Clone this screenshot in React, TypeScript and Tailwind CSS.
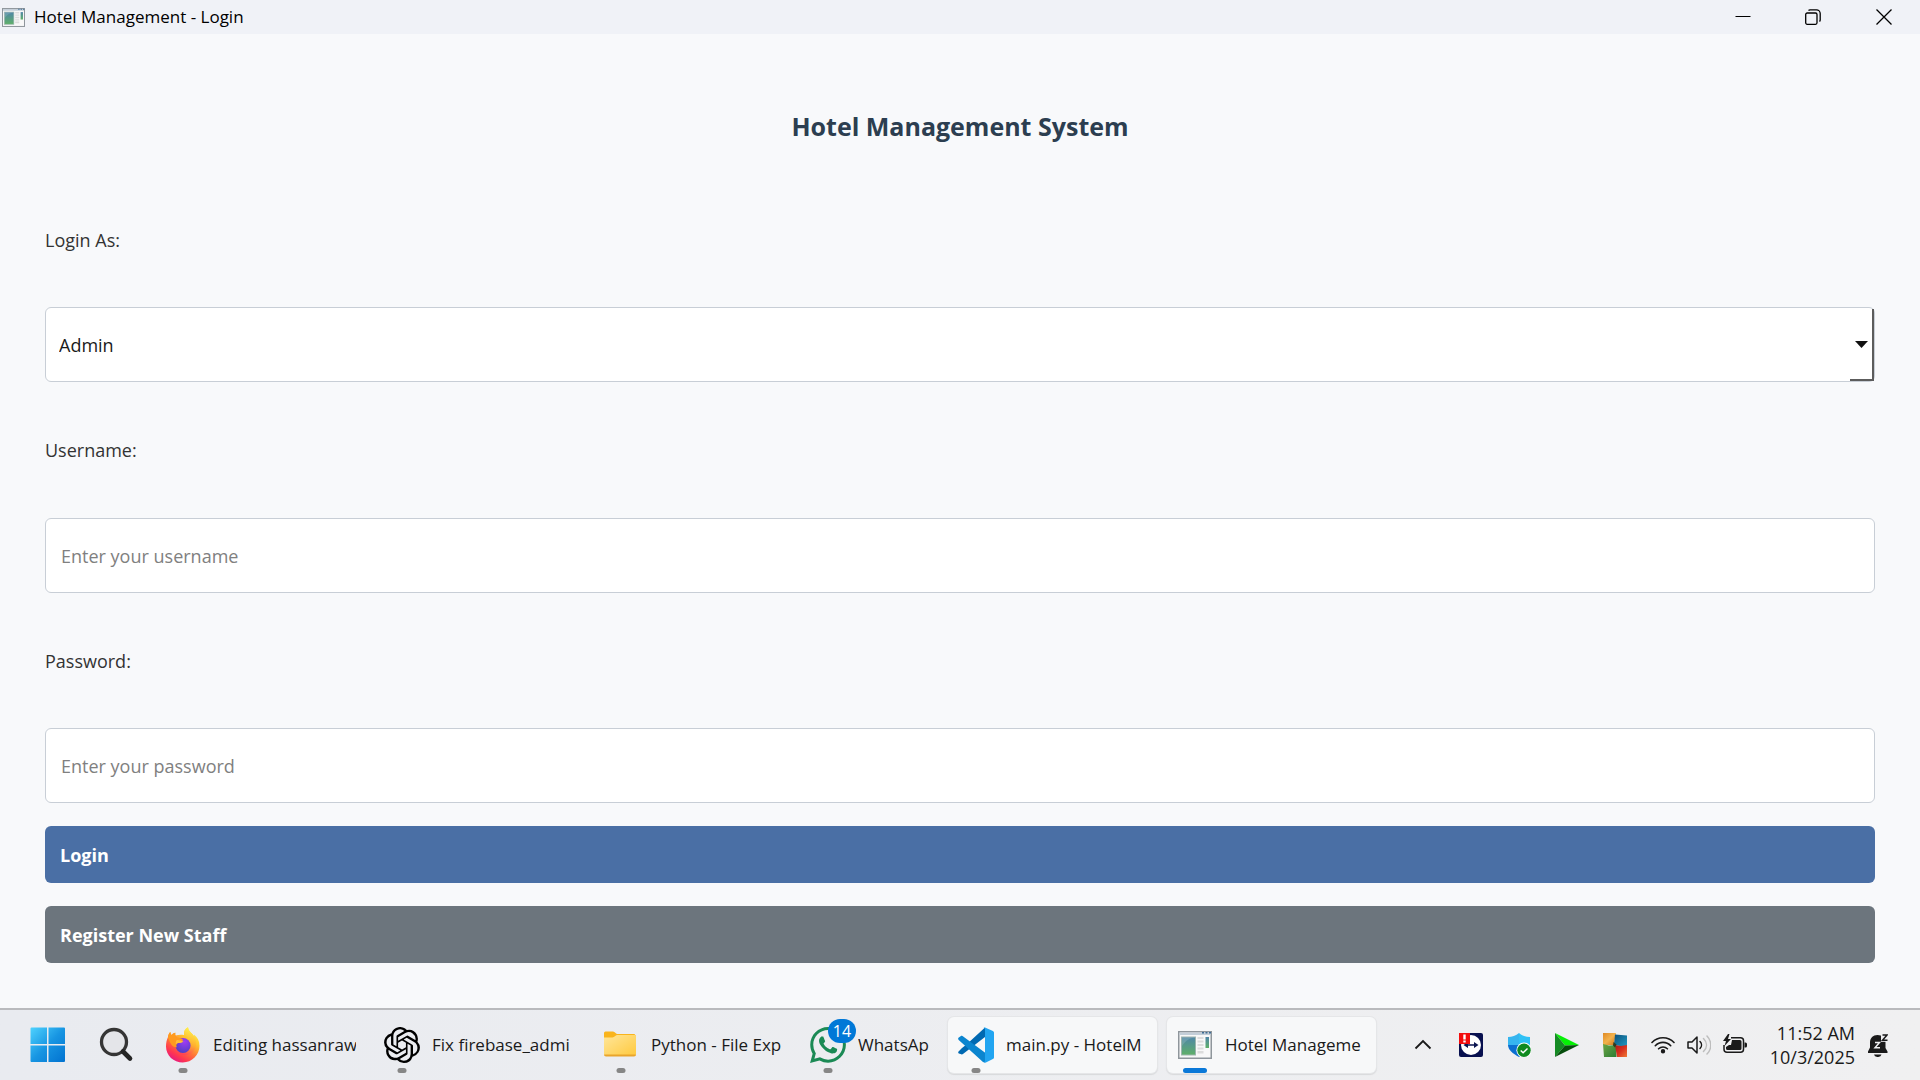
import React from "react";
import { SiOpenai, SiWhatsapp } from "react-icons/si";

function AppIcon({ className }: { className: string }) {
  return (
    <svg className={className} viewBox="0 0 34 28" aria-hidden="true">
      <defs>
        <linearGradient id="pane" x1="0" y1="0" x2="0" y2="1">
          <stop offset="0" stopColor="#4f86a8" />
          <stop offset="1" stopColor="#5fb068" />
        </linearGradient>
      </defs>
      <rect x="0.75" y="0.75" width="32.5" height="26.5" fill="#f8f8f8" stroke="#8f969c" strokeWidth="1.5" />
      <rect x="1.5" y="1.5" width="31" height="2.5" fill="#c3ced8" />
      <path d="M24 1h2v1.5h-2zM27.500 1h2v1.500h-2zM31 1h2v1.500h-2z" fill="#3e6c94" />
      <rect x="3.500" y="6" width="14" height="18" fill="url(#pane)" stroke="#9bb4ad" />
      <path d="M4 15c4-6 8-8 13-8.500V6.500H4z" fill="#ffffff" opacity="0.15" />
      <path d="M19.500 6h6v2h-6zM19.500 9.500h6v2h-6zM19.500 13h6v2h-6zM19.500 16.500h6v2h-6zM19.500 20h6v2.500h-6z" fill="#dcdcdc" />
      <rect x="27.500" y="6" width="3.500" height="11" fill="url(#pane)" />
    </svg>
  );
}

function WindowsLogo() {
  return (
    <svg className="size-9" viewBox="0 0 36 36" aria-hidden="true">
      <defs>
        <linearGradient id="win" gradientUnits="userSpaceOnUse" x1="0" y1="0" x2="36" y2="36">
          <stop offset="0" stopColor="#50d4ff" />
          <stop offset="0.5" stopColor="#1795e2" />
          <stop offset="1" stopColor="#0070cf" />
        </linearGradient>
      </defs>
      <path
        d="M1.500 0.500H17V17H0.500V1.500a1 1 0 0 1 1-1zM18.500 0.500H34a1 1 0 0 1 1 1V17H18.500zM0.500 18.500H17V35H1.500a1 1 0 0 1-1-1zM18.500 18.500H35V34a1 1 0 0 1-1 1H18.500z"
        fill="url(#win)"
      />
    </svg>
  );
}

function SearchGlyph() {
  return (
    <svg className="size-9" viewBox="0 0 36 36" aria-hidden="true">
      <circle cx="16" cy="15" r="12.500" fill="#e4e5e9" stroke="#353535" strokeWidth="3.300" />
      <path d="M25 24.500l7 7" stroke="#252525" strokeWidth="4.600" strokeLinecap="round" />
    </svg>
  );
}

function Firefox() {
  return (
    <svg className="size-9" viewBox="0 0 36 36" aria-hidden="true">
      <defs>
        <linearGradient id="ffBody" x1="0.85" y1="0.05" x2="0.25" y2="1">
          <stop offset="0" stopColor="#fff34f" />
          <stop offset="0.3" stopColor="#ffc42e" />
          <stop offset="0.58" stopColor="#ff7139" />
          <stop offset="0.8" stopColor="#ff3750" />
          <stop offset="1" stopColor="#e31587" />
        </linearGradient>
        <linearGradient id="ffFlame" x1="0.7" y1="0" x2="0.4" y2="1">
          <stop offset="0" stopColor="#fff44f" />
          <stop offset="0.55" stopColor="#ffb02e" />
          <stop offset="1" stopColor="#ff3f55" />
        </linearGradient>
        <radialGradient id="ffGlobe" cx="0.6" cy="0.25" r="0.8">
          <stop offset="0" stopColor="#a03bf5" />
          <stop offset="1" stopColor="#4a3fc0" />
        </radialGradient>
      </defs>
      <path
        d="M3 10c.3-2.500 1.200-4 2.400-5 .1 1.400.5 2.300 1.200 3 .9-1.100 2.200-2 3.800-2.300-.4 1-.4 2 .1 2.900C13 7.700 16 7.500 19 8c-.5-3.500 1.200-6.200 4-7.700.2 3 2.200 4.700 4.500 7 .8.900 1.200 1.500 1.600 2.300.1-.7 0-1.400-.2-2 3.500 2.500 5.600 6.400 5.600 11.200C34.500 28 27 35.500 17.800 35.500S1 28.500 1 19.500c0-3.500.6-6.500 2-9.500z"
        fill="url(#ffBody)"
      />
      <path d="M19 8c-.5-3.500 1.200-6.200 4-7.700.2 3 2.200 4.700 4.500 7 5 5.200 5 14-.5 18.500-5 4-14 3-16-4 5 4 13 2 14-5 .5-4-2-7.500-6-8.800z" fill="url(#ffFlame)" />
      <circle cx="18" cy="18.500" r="7.600" fill="url(#ffGlobe)" />
      <path
        d="M3 10c.3-2.500 1.200-4 2.400-5 .1 1.400.5 2.300 1.200 3 .9-1.100 2.200-2 3.800-2.300-.5 2 .3 3.800 2 4.800 1.600.3 3 .5 5.400 2 .8.500-.6 2.400-4.600 3.500-2.200.8-2.200 2.600-1.300 4.200C8 21 5 17 3 10z"
        fill="#ff9a1f"
      />
      <path d="M12 13c3-.5 4 1.700 6.500 1-1.200 2-3 2-5 2-1.200 0-2 .5-2.600 1.800-.3-2.300-.2-3.800 1.100-4.800z" fill="#ffbd3a" />
    </svg>
  );
}

function Folder() {
  return (
    <svg className="size-9" viewBox="0 0 36 36" aria-hidden="true">
      <defs>
        <linearGradient id="fold" x1="0" y1="0" x2="1" y2="1">
          <stop offset="0" stopColor="#ffe69a" />
          <stop offset="1" stopColor="#ffc93d" />
        </linearGradient>
      </defs>
      <path d="M1 6a1.500 1.500 0 0 1 1.500-1.500H10c2 0 2.800 2.500 4 2.500h17.500L33 9v6H1z" fill="#f9b41c" />
      <path d="M1 10.500h8.500c2 0 3-2.500 4.500-2.500h18a1 1 0 0 1 1 1v18a2 2 0 0 1-2 2H3a2 2 0 0 1-2-2z" fill="url(#fold)" />
      <path d="M1 27.500h32a2 2 0 0 1-2 2H3a2 2 0 0 1-2-2z" fill="#e9a52c" />
    </svg>
  );
}

function VsCode() {
  return (
    <svg className="size-9" viewBox="0 0 36 36" aria-hidden="true">
      <path d="M27 0.500L8.500 17.500 4 21 .8 24.200c-.8.800-.8 1.500 0 2.200L2.600 27c1 .7 1.800.5 2.700-.2L27 10z" fill="#0069b2" />
      <path d="M2.600 9.300L.8 10.500c-.9.800-.9 1.600-.1 2.500L25 35c.8.600 2 .5 2.500.2V26L5.200 9.400c-.9-.7-1.700-.7-2.600-.1z" fill="#0b85cf" />
      <path d="M27 .4c-.9 0-1.300.4-1.700.8.800-.5 1.700 0 1.700 1v31.600c0 1-.9 1.400-1.700.8.500.7 1.400 1.100 2.600.8l7-3.300c.7-.4 1.100-1 1.100-1.700V5.600c0-.8-.4-1.400-1.100-1.700z" fill="#22a5f1" />
    </svg>
  );
}

function TeamViewer() {
  return (
    <svg className="size-6" viewBox="0 0 24 24" aria-hidden="true">
      <rect width="24" height="24" rx="2" fill="#08104f" />
      <circle cx="12" cy="12" r="10" fill="#fff" />
      <path d="M4.500 12l4.500-3v2.200h6V9l4.500 3-4.500 3v-2.200H9V15z" fill="#0b1550" />
      <path d="M0 0h11v11H0z" fill="#f20d0d" />
      <path d="M4.300 1.500h2.400v5H4.300zM4.300 7.500h2.400v2H4.300z" fill="#fff" />
    </svg>
  );
}

function Shield() {
  return (
    <svg className="size-6" viewBox="0 0 24 24" aria-hidden="true">
      <path d="M12 0v12H1V4c4 0 8-1.500 11-4z" fill="#36b5ef" />
      <path d="M12 0c3 2.500 7 4 11 4v8H12z" fill="#2fc1f5" />
      <path d="M1 12h11v12C5.500 20.500 1.200 17 1 12z" fill="#0b6fd0" />
      <path d="M12 12h11c-.2 5-4.500 8.500-11 12z" fill="#1a8ae0" />
      <circle cx="17" cy="17.200" r="7.600" fill="#fff" />
      <circle cx="17" cy="17.200" r="6.700" fill="#0f8a1f" />
      <path d="M13.700 17.400l2.400 2.400 4.400-4.400" fill="none" stroke="#fff" strokeWidth="1.400" />
    </svg>
  );
}

function GreenArrow() {
  return (
    <svg className="size-6" viewBox="0 0 24 24" aria-hidden="true">
      <path d="M0 0l24 12-14 .5z" fill="#05f005" />
      <path d="M0 0l10 12.500L0 24z" fill="#158a24" />
      <path d="M0 24l10-11.500 14-.5z" fill="#064d0c" />
    </svg>
  );
}

function Patches() {
  return (
    <svg className="size-6" viewBox="0 0 24 24" aria-hidden="true">
      <defs>
        <linearGradient id="pOrange" x1="0" y1="0" x2="1" y2="1">
          <stop offset="0" stopColor="#e08a25" />
          <stop offset="0.5" stopColor="#f2b24c" />
          <stop offset="1" stopColor="#c9741c" />
        </linearGradient>
        <linearGradient id="pBlue" x1="0" y1="0" x2="1" y2="1">
          <stop offset="0" stopColor="#0d4f7a" />
          <stop offset="1" stopColor="#1f9bc4" />
        </linearGradient>
        <linearGradient id="pGreen" x1="0" y1="0" x2="1" y2="1">
          <stop offset="0" stopColor="#6ba544" />
          <stop offset="1" stopColor="#2d7c35" />
        </linearGradient>
        <linearGradient id="pRed" x1="0" y1="0" x2="1" y2="1">
          <stop offset="0" stopColor="#a81a18" />
          <stop offset="0.5" stopColor="#d8301f" />
          <stop offset="1" stopColor="#f07a35" />
        </linearGradient>
      </defs>
      <path d="M0 0h13l-1.500 8L13 12H0z" fill="url(#pOrange)" />
      <path d="M12 1.500l12 1V14l-7-1-6-1z" fill="url(#pBlue)" />
      <path d="M0 11l6 1.500 7-.5.500 12H1z" fill="url(#pGreen)" />
      <path d="M12 12l6 1 6-1v12H14z" fill="url(#pRed)" />
      <path d="M10.500 9l3 2.500-1.500 3-2-2z" fill="#2f3a1f" />
    </svg>
  );
}

function Wifi() {
  return (
    <svg className="size-6" viewBox="0 0 24 24" fill="none" stroke="#1a1a1a" strokeWidth="1.600" strokeLinecap="round" aria-hidden="true">
      <path d="M1 9.500a15 15 0 0 1 22 0M4.300 12.700a10.500 10.500 0 0 1 15.400 0M7.600 15.800a6.200 6.200 0 0 1 8.800 0" />
      <circle cx="12" cy="18.300" r="1.400" fill="#1a1a1a" />
    </svg>
  );
}

function Volume() {
  return (
    <svg className="size-6" viewBox="0 0 24 24" fill="none" strokeWidth="1.500" strokeLinecap="round" strokeLinejoin="round" aria-hidden="true">
      <path d="M1 9h4l5-5v16l-5-5H1z" stroke="#1a1a1a" />
      <path d="M13 8.500c2 2 2 5 0 7" stroke="#1a1a1a" />
      <path d="M16.500 5.500c4 4 4 9 0 13M20 3c5 5.500 5 13 0 18" stroke="#bdbdbd" />
    </svg>
  );
}

function Battery() {
  return (
    <svg className="size-6" viewBox="0 0 24 24" aria-hidden="true">
      <path d="M8 4.800h9.500a3 3 0 0 1 3 3v8.400a3 3 0 0 1-3 3H4a3 3 0 0 1-3-3V12" fill="none" stroke="#1a1a1a" strokeWidth="1.500" />
      <path d="M9 7h8a1.500 1.500 0 0 1 1.500 1.500v7A1.500 1.500 0 0 1 17 17H4.500A1.500 1.500 0 0 1 3 15.500V14l3-2h2z" fill="#1a1a1a" />
      <path d="M21.500 9.500h1a1.500 1.500 0 0 1 1.500 1.500v2a1.500 1.500 0 0 1-1.500 1.500h-1z" fill="#1a1a1a" />
      <path d="M5 1L0 8h3l-1.500 5L8 6H5l1.500-5z" fill="#1a1a1a" />
    </svg>
  );
}

function SnoozeBell() {
  return (
    <svg className="h-6 w-5" viewBox="0 0 20 24" aria-hidden="true">
      <path d="M9.500 2C5 2 2 5 2 9.500v5L0 18.500V20h19.500v-1.500L17.500 15V9.500C17.500 5 14 2 9.500 2z" fill="#1a1a1a" />
      <path d="M6 21.500h7.500a3.800 3 0 0 1-7.500 0z" fill="#1a1a1a" />
      <path d="M13 0H20v8.800h-7z" fill="#efeff1" />
      <path d="M14.500 2h4.500l-4.500 5.300h5" fill="none" stroke="#1a1a1a" strokeWidth="1.500" />
      <path d="M7 9.500h4.500L7 14.800h5" fill="none" stroke="#efeff1" strokeWidth="1.500" />
    </svg>
  );
}

type Task = { label: string; icon: React.ReactNode; width: string; state: "open" | "shown" | "active"; badge?: string };

const tasks: Task[] = [
  { label: "Editing hassanraw", icon: <Firefox />, width: "w-[209px]", state: "open" },
  { label: "Fix firebase_admi", icon: <SiOpenai className="size-9 text-black" />, width: "w-[209px]", state: "open" },
  { label: "Python - File Exp", icon: <Folder />, width: "w-[197px]", state: "open" },
  { label: "WhatsAp", icon: <SiWhatsapp className="size-9 text-[#1b8a55]" />, width: "w-[138px]", state: "open", badge: "14" },
  { label: "main.py - HotelM", icon: <VsCode />, width: "w-[209px]", state: "shown" },
  { label: "Hotel Manageme", icon: <AppIcon className="h-7 w-[34px]" />, width: "w-[209px]", state: "active" },
];

function TaskButton({ task }: { task: Task }) {
  const raised = task.state !== "open";
  return (
    <button
      type="button"
      className={`relative flex h-14 shrink-0 items-center gap-3 rounded-md pr-2 pl-2.5 ${task.width} ${
        raised ? "bg-[#f7f8f9] shadow-[0_0_0_1px_#e5e6e8,0_1px_1px_1px_#d8d9db]" : ""
      }`}
    >
      <span className="relative flex size-9 shrink-0 items-center justify-center">
        {task.icon}
        {task.badge && (
          <span className="absolute -top-2 left-[18px] flex h-6 w-7 items-center justify-center rounded-full bg-[#0078d7] text-base text-white">
            {task.badge}
          </span>
        )}
      </span>
      <span className="min-w-0 flex-1 overflow-hidden text-left whitespace-nowrap">{task.label}</span>
      <span
        className={`absolute bottom-0 left-7 h-[5px] -translate-x-1/2 rounded-full ${
          task.state === "active" ? "w-6 bg-[#0a78d8]" : "w-[9px] bg-[#868686]"
        }`}
      />
    </button>
  );
}

const labelClass = "flex flex-1 items-center pt-0.5 text-[18px] text-[#333333]";
const fieldClass =
  "h-[75px] w-full rounded-md border border-[#c8ced6] bg-white pt-0.5 text-[18px] outline-none placeholder:text-[#808080]";
const actionClass = "flex h-[57px] shrink-0 items-center rounded-md px-[15px] pt-0.5 text-[18px] font-bold text-white";

export default function App() {
  return (
    <div className="flex min-h-screen flex-col bg-[#f8f9fb] font-['Open_Sans',sans-serif] text-[#1a1a1a]">
      <header className="flex h-[34px] items-center bg-[#f0f2f7] text-black">
        <AppIcon className="ml-0.5 h-[19px] w-[23px]" />
        <h1 className="ml-[9px] text-[17px]">Hotel Management - Login</h1>
        <div className="ml-auto flex h-full">
          <button type="button" aria-label="Minimize" className="flex w-[70px] items-center justify-center">
            <svg className="size-4" viewBox="0 0 16 16" stroke="currentColor">
              <path d="M0.500 7.500h15" />
            </svg>
          </button>
          <button type="button" aria-label="Restore" className="flex w-[70px] items-center justify-center">
            <svg className="size-4" viewBox="0 0 16 16" fill="none" stroke="currentColor" strokeWidth="1.300">
              <rect x="0.700" y="4" width="11.300" height="11.300" rx="1.500" />
              <path d="M3.500 1.500C4 1 4.500.8 5 .8h6.500a3.700 3.700 0 0 1 3.700 3.700V11c0 .5-.3 1-.7 1.500" />
            </svg>
          </button>
          <button type="button" aria-label="Close" className="flex w-[72px] items-center justify-center">
            <svg className="size-4" viewBox="0 0 16 16" stroke="currentColor" strokeWidth="1.300">
              <path d="M0.500 0.500l15 15M15.500 0.500l-15 15" />
            </svg>
          </button>
        </div>
      </header>

      <form className="flex flex-1 flex-col gap-[23px] p-[45px]" onSubmit={(e) => e.preventDefault()}>
        <h2 className="flex h-[93px] items-center justify-center pt-0.5 text-[25px] font-bold text-[#2c3e50]">
          Hotel Management System
        </h2>

        <label htmlFor="role" className={labelClass}>
          Login As:
        </label>
        <div className="relative">
          <select id="role" className={`${fieldClass} appearance-none px-[13px] text-[#1a1a1a]`}>
            <option>Admin</option>
            <option>Staff</option>
          </select>
          <span className="pointer-events-none absolute right-px bottom-px h-[72px] w-6 border-r-2 border-[#5c5c5c]" />
          <span className="pointer-events-none absolute right-px bottom-px w-6 border-b-2 border-[#5c5c5c]" />
          <svg className="pointer-events-none absolute top-[34px] right-[7px] h-[7px] w-[13px]" viewBox="0 0 13 7" aria-hidden="true">
            <path d="M0 0h13L6.500 7z" fill="#111" />
          </svg>
        </div>

        <label htmlFor="username" className={labelClass}>
          Username:
        </label>
        <input id="username" type="text" placeholder="Enter your username" className={`${fieldClass} px-[15px]`} />

        <label htmlFor="password" className={labelClass}>
          Password:
        </label>
        <input id="password" type="password" placeholder="Enter your password" className={`${fieldClass} px-[15px]`} />

        <button type="submit" className={`${actionClass} bg-[#4a6fa5]`}>
          Login
        </button>
        <button type="button" className={`${actionClass} bg-[#6c757d]`}>
          Register New Staff
        </button>
      </form>

      <footer className="flex h-[72px] items-center border-t-2 border-[#b9babd] bg-linear-to-r from-[#e9ebf0] to-[#f0f0f1] pr-8 pb-px pl-[30px] text-[17px]">
        <button type="button" aria-label="Start">
          <WindowsLogo />
        </button>
        <button type="button" aria-label="Search" className="ml-8">
          <SearchGlyph />
        </button>
        <nav className="ml-[21px] flex gap-2.5">
          {tasks.map((task) => (
            <TaskButton key={task.label} task={task} />
          ))}
        </nav>
        <div className="ml-auto flex items-center">
          <div className="flex items-center gap-6">
            <button type="button" aria-label="Show hidden icons">
              <svg className="size-6" viewBox="0 0 24 24" fill="none" stroke="#1a1a1a" strokeWidth="1.800">
                <path d="M4.500 15.500L12 8l7.500 7.500" />
              </svg>
            </button>
            <TeamViewer />
            <Shield />
            <GreenArrow />
            <Patches />
          </div>
          <div className="ml-6 flex gap-3">
            <Wifi />
            <Volume />
            <Battery />
          </div>
          <time className="ml-[22px] w-[86px] text-right text-[18px] leading-6 whitespace-nowrap">
            11:52 AM
            <br />
            10/3/2025
          </time>
          <button type="button" aria-label="Notifications" className="ml-[13px]">
            <SnoozeBell />
          </button>
        </div>
      </footer>
    </div>
  );
}
